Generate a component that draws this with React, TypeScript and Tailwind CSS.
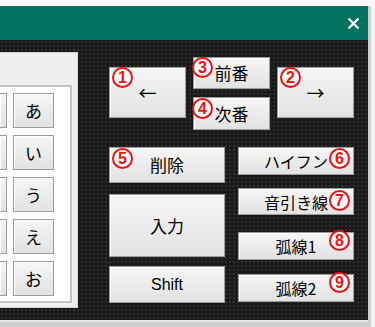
import type { ReactNode } from "react";

const JP = "font-['Noto_Sans_CJK_JP',sans-serif]";

// 赤い丸数字バッジ
function Badge({ n, className }: { n: number; className: string }) {
  return (
    <span
      className={`absolute flex h-[21px] w-[21px] items-center justify-center rounded-full border-2 border-[#ee1111] bg-white font-['Liberation_Sans',sans-serif] text-[16px] font-bold leading-none text-[#ee1111] ${className}`}
    >
      {n}
    </span>
  );
}

function Key({
  children,
  className = "",
  font = JP,
}: {
  children?: ReactNode;
  className?: string;
  font?: string;
}) {
  return (
    <div
      className={`flex items-center justify-center border border-[#9c9c9c] bg-gradient-to-b from-[#f6f6f6] to-[#e2e2e2] text-black shadow-[inset_1px_1px_0_#ffffff] ${font} ${className}`}
    >
      {children}
    </div>
  );
}

const KANA = ["あ", "い", "う", "え", "お"];

export default function App() {
  return (
    <div className="h-[327px] w-[375px] overflow-hidden bg-[#f4f4f4]">
      <div className="h-[6px] bg-[#f7f7f7]" />
      <div className="flex">
        <div className="w-[368px]">
          {/* タイトルバー */}
          <div className="flex h-[34px] items-center justify-end bg-[#00705f] pr-[7px]">
            <svg width="13" height="13" viewBox="0 0 13 13" className="mr-[1px]">
              <path d="M1.5 1.5L11.5 11.5M11.5 1.5L1.5 11.5" stroke="#fff" strokeWidth="2.4" />
            </svg>
          </div>

          {/* 本体 */}
          <div className="relative flex h-[280px] bg-[#191919] bg-[radial-gradient(circle,#303030_1px,transparent_1.6px)] bg-[length:4px_4px]">
            {/* 左のかなパネル */}
            <div className="mt-[12px] flex h-[256px] w-[78px] flex-col border-y border-r border-[#d2d2d2] bg-[#efefef]">
              <div className="h-[32px]" />
              <div className="flex h-[218px] w-[72px] gap-[6px] border-y-2 border-r-2 border-[#c4c4c4] bg-white pt-[6px]">
                <div className="flex w-[7px] flex-col gap-[7px]">
                  {KANA.map((k) => (
                    <Key key={k} className="h-[35px] w-[7px] border-l-0" />
                  ))}
                </div>
                <div className="flex w-[41px] flex-col gap-[7px]">
                  {KANA.map((k) => (
                    <Key key={k} className="h-[35px] text-[17px]">
                      {k}
                    </Key>
                  ))}
                </div>
              </div>
            </div>

            {/* 右のボタン群 */}
            <div className="ml-[31px] flex w-[245px] flex-col pt-[17px]">
              <div className="flex h-[73px] gap-[7px]">
                <div className="relative mt-[10px] w-[77px]">
                  <Key className="h-[51px] text-[18px]">←</Key>
                  <Badge n={1} className="left-[3px] top-[0px]" />
                </div>
                <div className="flex w-[77px] flex-col gap-[8px]">
                  <div className="relative">
                    <Key className="h-[32px] text-[17px]">前番</Key>
                    <Badge n={3} className="left-[-1px] top-[0px]" />
                  </div>
                  <div className="relative">
                    <Key className="h-[33px] text-[17px]">次番</Key>
                    <Badge n={4} className="left-[-1px] top-[1px]" />
                  </div>
                </div>
                <div className="relative mt-[10px] w-[77px]">
                  <Key className="h-[51px] text-[18px]">→</Key>
                  <Badge n={2} className="left-[3px] top-[0px]" />
                </div>
              </div>

              <div className="mt-[17px] flex gap-[13px]">
                <div className="flex w-[116px] flex-col">
                  <div className="relative">
                    <Key className="h-[36px] text-[17px]">削除</Key>
                    <Badge n={5} className="left-[3px] top-[1px]" />
                  </div>
                  <Key className="mt-[11px] h-[63px] text-[17px]">入力</Key>
                  <Key
                    className="mt-[9px] h-[37px] text-[16px]"
                    font="font-['Liberation_Sans',sans-serif]"
                  >
                    Shift
                  </Key>
                </div>
                <div className="flex w-[116px] flex-col">
                  <div className="relative">
                    <Key className="h-[28px] text-[16px]">ハイフン</Key>
                    <Badge n={6} className="right-[4px] top-[1px]" />
                  </div>
                  <div className="relative mt-[13px]">
                    <Key className="h-[27px] text-[16px]">音引き線</Key>
                    <Badge n={7} className="right-[4px] top-[2px]" />
                  </div>
                  <div className="relative mt-[17px]">
                    <Key className="h-[28px] text-[16px]">弧線1</Key>
                    <Badge n={8} className="right-[4px] top-[-2px]" />
                  </div>
                  <div className="relative mt-[14px]">
                    <Key className="h-[28px] text-[16px]">弧線2</Key>
                    <Badge n={9} className="right-[4px] top-[-2px]" />
                  </div>
                </div>
              </div>
            </div>
          </div>

          <div className="h-[2px] bg-[#e6e6e6]" />
          <div className="h-[5px] bg-[#cfcfcf]" />
        </div>
        <div className="flex h-[321px] w-[7px]">
          <div className="w-[3px] bg-[#cfcfcf]" />
          <div className="w-[4px] bg-[#f4f4f4]" />
        </div>
      </div>
    </div>
  );
}
